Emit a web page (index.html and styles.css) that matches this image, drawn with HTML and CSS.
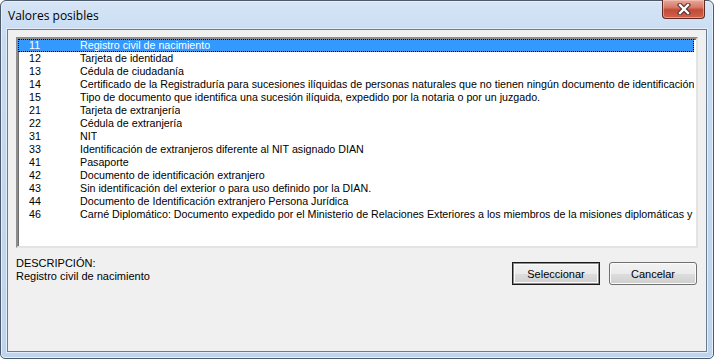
FILE: index.html
```html
<!DOCTYPE html>
<html lang="es">
<head>
    <meta charset="UTF-8">
    <title>Valores posibles</title>
    <link rel="stylesheet" href="styles.css">
</head>
<body>
    <div class="window">
        <div class="titlebar">
            <span class="title">Valores posibles</span>
            <button class="close-btn" aria-label="Cerrar">
                <svg width="14" height="12" viewBox="0 0 14 12">
                    <path d="M3 2 L11 10 M11 2 L3 10" stroke="#4a2a28" stroke-width="4.4" stroke-linecap="square"/>
                    <path d="M3 2 L11 10 M11 2 L3 10" stroke="#ffffff" stroke-width="2.4" stroke-linecap="square"/>
                </svg>
            </button>
        </div>

        <div class="client">
            <div class="listbox">
                <div class="row selected"><span class="code">11</span><span class="name">Registro civil de nacimiento</span></div>
                <div class="row"><span class="code">12</span><span class="name">Tarjeta de identidad</span></div>
                <div class="row"><span class="code">13</span><span class="name">Cédula de ciudadanía</span></div>
                <div class="row"><span class="code">14</span><span class="name">Certificado de la Registraduría para sucesiones ilíquidas de personas naturales que no tienen ningún documento de identificación</span></div>
                <div class="row"><span class="code">15</span><span class="name">Tipo de documento que identifica una sucesión ilíquida, expedido por la notaria o por un juzgado.</span></div>
                <div class="row"><span class="code">21</span><span class="name">Tarjeta de extranjería</span></div>
                <div class="row"><span class="code">22</span><span class="name">Cédula de extranjería</span></div>
                <div class="row"><span class="code">31</span><span class="name">NIT</span></div>
                <div class="row"><span class="code">33</span><span class="name">Identificación de extranjeros diferente al NIT asignado DIAN</span></div>
                <div class="row"><span class="code">41</span><span class="name">Pasaporte</span></div>
                <div class="row"><span class="code">42</span><span class="name">Documento de identificación extranjero</span></div>
                <div class="row"><span class="code">43</span><span class="name">Sin identificación del exterior o para uso definido por la DIAN.</span></div>
                <div class="row"><span class="code">44</span><span class="name">Documento de Identificación extranjero Persona Jurídica</span></div>
                <div class="row"><span class="code">46</span><span class="name">Carné Diplomático: Documento expedido por el Ministerio de Relaciones Exteriores a los miembros de la misiones diplomáticas y consulares</span></div>
            </div>

            <div class="bottom">
                <div class="description">
                    <div>DESCRIPCIÓN:</div>
                    <div>Registro civil de nacimiento</div>
                </div>
                <div class="buttons">
                    <button class="btn default">Seleccionar</button>
                    <button class="btn">Cancelar</button>
                </div>
            </div>
        </div>
    </div>
</body>
</html>
```

FILE: styles.css
```css
html, body {
    margin: 0;
    padding: 0;
}

body {
    width: 714px;
    height: 359px;
    background: #ffffff;
    font-family: "Liberation Sans", Arial, sans-serif;
    font-size: 11px;
    color: #000000;
}

.window {
    box-sizing: border-box;
    width: 714px;
    height: 359px;
    border: 1px solid #4c5a6b;
    border-radius: 6px 6px 5px 5px;
    background: linear-gradient(to bottom, #d6e5f6 0px, #c6dbf2 40px, #bcd4ee 100%);
    padding: 0 6px 6px 6px;
    display: flex;
    flex-direction: column;
    box-shadow: inset 0 0 0 1px #e6f0fb;
}

.titlebar {
    height: 28px;
    display: flex;
    align-items: flex-start;
    justify-content: space-between;
}

.title {
    font-family: "Open Sans", "Liberation Sans", sans-serif;
    font-size: 12px;
    margin-top: 6px;
    margin-left: 1px;
    color: #000000;
}

.close-btn {
    width: 43px;
    height: 19px;
    margin-right: 2px;
    margin-top: -1px;
    border: 1px solid #5e2a24;
    border-top: none;
    border-radius: 0 0 4px 4px;
    background: linear-gradient(to bottom, #e9a99b 0%, #d77a68 40%, #c24b36 55%, #d2624c 100%);
    box-shadow: inset 0 0 0 1px rgba(255, 210, 200, 0.5);
    display: flex;
    align-items: center;
    justify-content: center;
    padding: 0;
}

.client {
    flex: 1;
    background: #f0f0f0;
    border: 1px solid #6a7c92;
    box-shadow: 0 0 0 1px #e3eefa;
    padding: 7px 8px 0 8px;
}

.listbox {
    height: 207px;
    background: #ffffff;
    border-style: solid;
    border-width: 2px;
    border-color: #8d8d8d #e3e3e3 #e3e3e3 #8d8d8d;
    box-shadow: inset 1px 1px 0 #6e6e6e;
    padding-right: 2px;
    overflow: hidden;
    font-size: 10.7px;
}

.row {
    display: flex;
    height: 13px;
    line-height: 13px;
    white-space: nowrap;
}

.row.selected {
    background: #3399ff;
    color: #ffffff;
    outline: 1px dotted #000000;
    outline-offset: -1px;
}

.code {
    width: 62px;
    flex-shrink: 0;
    padding-left: 11px;
    box-sizing: border-box;
}

.name {
    overflow: hidden;
}

.bottom {
    display: flex;
    justify-content: space-between;
    margin-top: 8px;
}

.description {
    line-height: 13px;
    padding-top: 1px;
}

.buttons {
    display: flex;
    gap: 9px;
    margin-top: 6px;
    margin-right: 1px;
}

.btn {
    width: 88px;
    height: 23px;
    font-family: "Liberation Sans", Arial, sans-serif;
    font-size: 11px;
    color: #000000;
    border: 1px solid #707070;
    border-radius: 3px;
    background: linear-gradient(to bottom, #f2f2f2 0%, #ebebeb 50%, #dddddd 51%, #cfcfcf 100%);
    box-shadow: inset 0 0 0 1px #fbfbfb;
    padding: 0;
}

.btn.default {
    border: 1px solid #1a1a1a;
    border-radius: 0;
    box-shadow: inset 0 0 0 1px #8a8a8a, inset 0 0 0 2px #fbfbfb;
}
```
